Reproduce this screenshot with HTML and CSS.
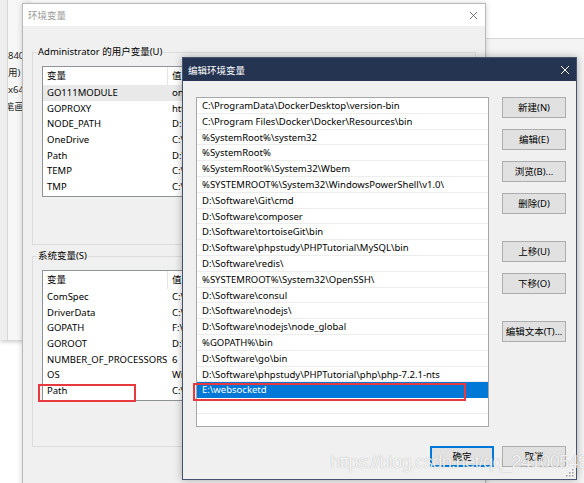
FILE: index.html
```html
<!DOCTYPE html>
<html>
<head>
<meta charset="utf-8">
<link rel="stylesheet" href="styles.css">
</head>
<body>
<div class="bgleft">
  <div class="bgleft-panel">
    <span>840</span>
    <span>用)</span>
    <span>x64</span>
    <span class="cut">笔画</span>
  </div>
</div>
<div class="bgright"><div class="bgright-top"></div></div>

<div class="win env">
  <div class="env-title">
    <span>环境变量</span>
    <svg class="xicon" width="10" height="10" viewBox="0 0 10 10"><path d="M1 1L9 9M9 1L1 9" stroke="#6a6a6a" stroke-width="1" fill="none"/></svg>
  </div>
  <div class="env-body">
    <fieldset class="group g1">
      <legend>Administrator 的用户变量(U)</legend>
      <div class="lv">
        <div class="lv-head"><span class="c1">变量</span><span class="c2">值</span></div>
        <div class="lv-row hl"><span class="c1">GO111MODULE</span><span class="c2">on</span></div>
        <div class="lv-row"><span class="c1">GOPROXY</span><span class="c2">https://goproxy.cn</span></div>
        <div class="lv-row"><span class="c1">NODE_PATH</span><span class="c2">D:\Software\nodejs\node_modules</span></div>
        <div class="lv-row"><span class="c1">OneDrive</span><span class="c2">C:\Users\Administrator\OneDrive</span></div>
        <div class="lv-row"><span class="c1">Path</span><span class="c2">D:\Software\nodejs\node_global</span></div>
        <div class="lv-row"><span class="c1">TEMP</span><span class="c2">C:\Users\Administrator\AppData\Local\Temp</span></div>
        <div class="lv-row"><span class="c1">TMP</span><span class="c2">C:\Users\Administrator\AppData\Local\Temp</span></div>
      </div>
    </fieldset>
    <fieldset class="group g2">
      <legend>系统变量(S)</legend>
      <div class="lv">
        <div class="lv-head"><span class="c1">变量</span><span class="c2">值</span></div>
        <div class="lv-row"><span class="c1">ComSpec</span><span class="c2">C:\Windows\system32\cmd.exe</span></div>
        <div class="lv-row"><span class="c1">DriverData</span><span class="c2">C:\Windows\System32\Drivers\DriverData</span></div>
        <div class="lv-row"><span class="c1">GOPATH</span><span class="c2">F:\go</span></div>
        <div class="lv-row"><span class="c1">GOROOT</span><span class="c2">D:\Software\go</span></div>
        <div class="lv-row"><span class="c1">NUMBER_OF_PROCESSORS</span><span class="c2">6</span></div>
        <div class="lv-row"><span class="c1">OS</span><span class="c2">Windows_NT</span></div>
        <div class="lv-row"><span class="c1">Path</span><span class="c2">C:\ProgramData\DockerDesktop\version-bin</span></div>
      </div>
    </fieldset>
  </div>
</div>

<div class="win edit">
  <div class="edit-title">
    <span>编辑环境变量</span>
    <svg class="xicon" width="10" height="10" viewBox="0 0 10 10"><path d="M1 1L9 9M9 1L1 9" stroke="#ffffff" stroke-width="1" fill="none"/></svg>
  </div>
  <div class="edit-body">
    <div class="edit-main">
      <div class="plist">
        <div class="prow">C:\ProgramData\DockerDesktop\version-bin</div>
        <div class="prow">C:\Program Files\Docker\Docker\Resources\bin</div>
        <div class="prow">%SystemRoot%\system32</div>
        <div class="prow">%SystemRoot%</div>
        <div class="prow">%SystemRoot%\System32\Wbem</div>
        <div class="prow">%SYSTEMROOT%\System32\WindowsPowerShell\v1.0\</div>
        <div class="prow">D:\Software\Git\cmd</div>
        <div class="prow">D:\Software\composer</div>
        <div class="prow">D:\Software\tortoiseGit\bin</div>
        <div class="prow">D:\Software\phpstudy\PHPTutorial\MySQL\bin</div>
        <div class="prow">D:\Software\redis\</div>
        <div class="prow">%SYSTEMROOT%\System32\OpenSSH\</div>
        <div class="prow">D:\Software\consul</div>
        <div class="prow">D:\Software\nodejs\</div>
        <div class="prow">D:\Software\nodejs\node_global</div>
        <div class="prow">%GOPATH%\bin</div>
        <div class="prow">D:\Software\go\bin</div>
        <div class="prow">D:\Software\phpstudy\PHPTutorial\php\php-7.2.1-nts</div>
        <div class="prow sel">E:\websocketd</div>
        <div class="prow"></div>
      </div>
      <div class="btncol">
        <button class="btn">新建(N)</button>
        <button class="btn">编辑(E)</button>
        <button class="btn">浏览(B)...</button>
        <button class="btn">删除(D)</button>
        <button class="btn sep">上移(U)</button>
        <button class="btn">下移(O)</button>
        <button class="btn sep">编辑文本(T)...</button>
      </div>
    </div>
    <div class="edit-foot">
      <button class="btn ok">确定</button>
      <button class="btn">取消</button>
    </div>
  </div>
  <svg class="grip" width="8" height="8" viewBox="0 0 8 8">
    <rect x="6" y="0" width="1.5" height="1.5" fill="#a0a0a0"/>
    <rect x="3" y="3" width="1.5" height="1.5" fill="#a0a0a0"/>
    <rect x="6" y="3" width="1.5" height="1.5" fill="#a0a0a0"/>
    <rect x="0" y="6" width="1.5" height="1.5" fill="#a0a0a0"/>
    <rect x="3" y="6" width="1.5" height="1.5" fill="#a0a0a0"/>
    <rect x="6" y="6" width="1.5" height="1.5" fill="#a0a0a0"/>
  </svg>
</div>

<div class="mark mark-path"></div>
<div class="mark mark-edit"></div>
<div class="watermark">https://blog.csdn.net/qq_24100549</div>
</body>
</html>
```

FILE: styles.css
```css
* { box-sizing: border-box; }
html, body { margin: 0; padding: 0; }
body {
  width: 584px;
  height: 483px;
  overflow: hidden;
  position: relative;
  background: #ffffff;
  font-family: "Noto Sans", "Noto Sans CJK SC", sans-serif;
  font-size: 9.5px;
  color: #000;
}

/* background windows */
.bgleft {
  position: absolute;
  left: 0; top: 0;
  width: 30px; height: 340px;
  background: #eeeeee;
  box-shadow: 0 2px 4px rgba(0,0,0,0.2);
}
.bgleft-panel {
  margin-left: 7px;
  height: 100%;
  border-left: 1px solid #d6d6d6;
  background: #f7f7f7;
  padding-top: 50px;
  display: flex;
  flex-direction: column;
  gap: 4.5px;
  line-height: 12.5px;
  overflow: hidden;
  color: #222;
}
.bgleft-panel .cut { margin-left: -3px; }

.bgright {
  position: absolute;
  left: 480px; top: 0;
  width: 104px; height: 483px;
  background: #f4f4f4;
}
.bgright-top {
  height: 39px;
  background: #ffffff;
  border-bottom: 1px solid #d9d9d9;
}

.win { position: absolute; }

/* environment variables dialog */
.env {
  left: 22px; top: 3px;
  width: 464px; height: 490px;
  background: #f0f0f0;
  border: 1px solid #b9b9b9;
  box-shadow: 0 0 6px rgba(0,0,0,0.18);
}
.env-title {
  height: 22px;
  background: #ffffff;
  color: #9a9a9a;
  display: flex;
  align-items: center;
  justify-content: space-between;
  padding: 0 7px 0 5px;
}
.env-title .xicon { width: 9px; height: 9px; }
.env-body { padding: 0 9px; }
.group {
  margin: 0;
  min-width: 0;
  border: 1px solid #dcdcdc;
  padding: 8px 9px 47px 9px;
}
.group legend {
  padding: 0 1px;
  margin-left: -5px;
  line-height: 12px;
  font-size: 9.5px;
}
.g1 { margin-top: 20px; }
.g2 { margin-top: 5px; padding-bottom: 45px; }

.lv {
  height: 131px;
  background: #ffffff;
  border: 1px solid #8f9399;
  overflow: hidden;
}
.lv-head, .lv-row {
  display: flex;
  white-space: nowrap;
}
.lv-head { height: 18px; line-height: 18px; }
.lv-row { height: 15.7px; line-height: 15.7px; }
.lv .c1 {
  width: 125px;
  flex: none;
  padding-left: 4px;
}
.lv-head .c1 { border-right: 1px solid #e5e5e5; }
.lv .c2 { padding-left: 4px; }
.lv-row.hl { background: #e9e9e9; }

/* edit dialog */
.edit {
  left: 182px; top: 57px;
  width: 395px; height: 423px;
  background: #f0f0f0;
  border: 1px solid #44526d;
  box-shadow: 0 0 8px rgba(0,0,0,0.3);
}
.edit-title {
  height: 23px;
  background: #243451;
  color: #ffffff;
  display: flex;
  align-items: center;
  justify-content: space-between;
  padding: 0 6px 0 5px;
}
.edit-body {
  padding: 16px 10px 0 13px;
}
.edit-main { display: flex; }
.plist {
  width: 293px;
  height: 330px;
  flex: none;
  background: #ffffff;
  border: 1px solid #a7a7a7;
  overflow: hidden;
}
.prow {
  height: 15.8px;
  line-height: 15px;
  padding-left: 5px;
  border-bottom: 1px solid #ededed;
  white-space: nowrap;
  overflow: hidden;
}
.prow.sel {
  background: #0078d7;
  color: #ffffff;
  border-bottom-color: #0078d7;
}
.btncol {
  margin-left: 13px;
  width: 64px;
  display: flex;
  flex-direction: column;
  gap: 11px;
}
.btncol .sep { margin-top: 16px; }
.btn {
  width: 64px;
  height: 21px;
  padding: 0;
  margin: 0;
  background: #e1e1e1;
  border: 1px solid #adadad;
  font-family: "Noto Sans", "Noto Sans CJK SC", sans-serif;
  font-size: 9.5px;
  color: #000;
  line-height: 19px;
  text-align: center;
}
.btn.ok {
  border: 1px solid #0078d7;
  box-shadow: inset 0 0 0 1px #0078d7;
}
.edit-foot {
  margin-top: 19px;
  display: flex;
  justify-content: flex-end;
  gap: 8px;
}
.grip {
  position: absolute;
  right: 2px; bottom: 2px;
}

/* annotations */
.mark {
  position: absolute;
  border: 2px solid #e8393e;
}
.mark-path { left: 38px; top: 384px; width: 98px; height: 18px; }
.mark-edit { left: 193px; top: 383px; width: 273px; height: 18px; }

.watermark {
  position: absolute;
  left: 330px; top: 451px;
  font-family: "Liberation Sans", Arial, sans-serif;
  font-size: 18.5px;
  letter-spacing: -0.8px;
  color: rgba(255,255,255,0.85);
  text-shadow: 0 0 1px rgba(0,0,0,0.3);
  white-space: nowrap;
}
```
